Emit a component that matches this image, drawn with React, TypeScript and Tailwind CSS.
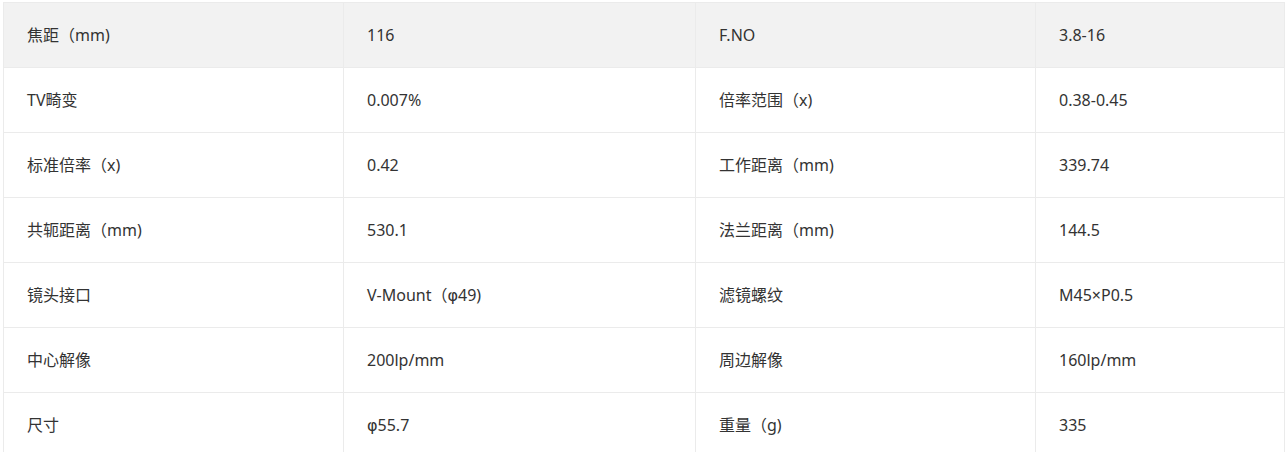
import React from 'react';

const rows: [string, string, string, string][] = [
  ['焦距（mm)', '116', 'F.NO', '3.8-16'],
  ['TV畸变', '0.007%', '倍率范围（x)', '0.38-0.45'],
  ['标准倍率（x)', '0.42', '工作距离（mm)', '339.74'],
  ['共轭距离（mm)', '530.1', '法兰距离（mm)', '144.5'],
  ['镜头接口', 'V-Mount（φ49)', '滤镜螺纹', 'M45×P0.5'],
  ['中心解像', '200lp/mm', '周边解像', '160lp/mm'],
  ['尺寸', 'φ55.7', '重量（g)', '335'],
];

// phi: DejaVu draws the looped form seen in the reference
function Cell({ text }: { text: string }) {
  const parts = text.split('φ');
  return (
    <>
      {parts.map((p, k) => (
        <React.Fragment key={k}>
          {k > 0 && <span style={{ fontFamily: '"DejaVu Sans", sans-serif' }}>φ</span>}
          {p}
        </React.Fragment>
      ))}
    </>
  );
}

export default function App() {
  return (
    <div
      className="bg-white pl-[3px] pt-[2px] pr-[4px] h-[452px] overflow-hidden"
      style={{ fontFamily: '"Noto Sans", "Noto Sans CJK SC", sans-serif' }}
    >
      <table className="w-[1281px] border-collapse table-fixed text-[16px] text-[#333]">
        <colgroup>
          <col className="w-[340px]" />
          <col className="w-[352px]" />
          <col className="w-[340px]" />
          <col className="w-[249px]" />
        </colgroup>
        <tbody>
          {rows.map((r, i) => (
            <tr key={i} className={i === 0 ? 'bg-[#f2f2f2]' : 'bg-white'}>
              {r.map((c, j) => (
                <td
                  key={j}
                  className="h-[65px] border border-[#ebebeb] px-[23px] align-middle whitespace-nowrap"
                >
                  <Cell text={c} />
                </td>
              ))}
            </tr>
          ))}
        </tbody>
      </table>
    </div>
  );
}
